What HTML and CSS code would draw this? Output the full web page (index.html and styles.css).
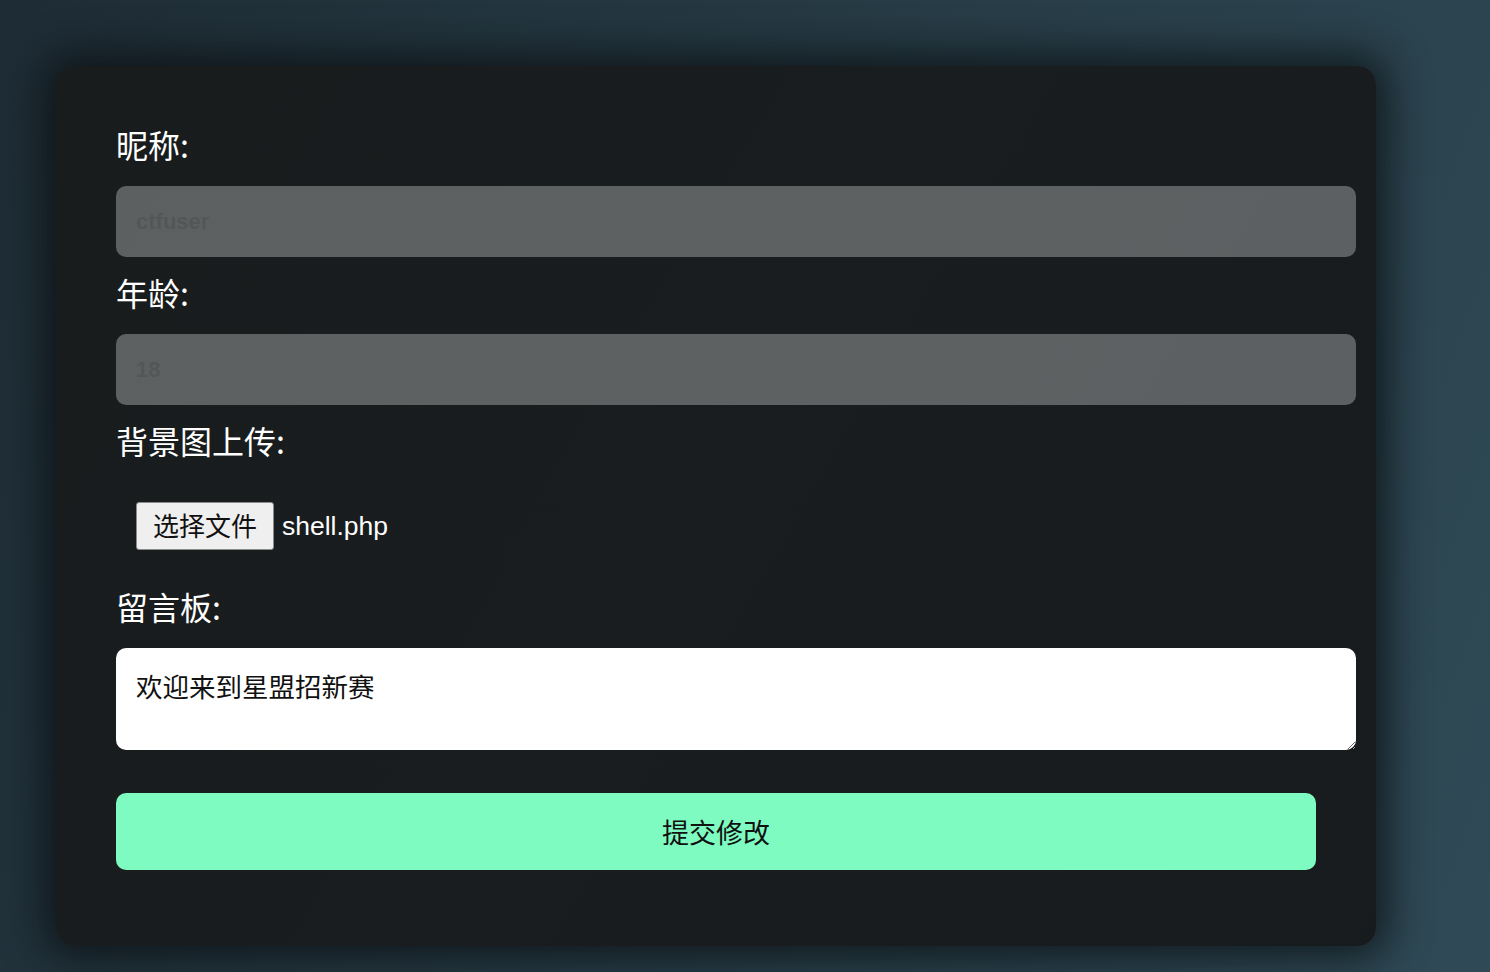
FILE: index.html
```html
<!DOCTYPE html>
<html lang="zh-CN">
<head>
    <meta charset="UTF-8">
    <meta name="viewport" content="width=device-width, initial-scale=1.0">
    <link rel="stylesheet" href="styles.css">
    <title>个人资料</title>
</head>
<body>
    <div class="container">
        <form class="profile-form" onsubmit="return false;">
            <label for="nickname">昵称:</label>
            <input type="text" id="nickname" class="field-locked" value="ctfuser" readonly>

            <label for="age">年龄:</label>
            <input type="text" id="age" class="field-locked" value="18" readonly>

            <label>背景图上传:</label>
            <div class="file-row">
                <span class="file-btn">选择文件</span>
                <span class="file-name">shell.php</span>
            </div>

            <label for="message">留言板:</label>
            <textarea id="message">欢迎来到星盟招新赛</textarea>

            <button type="submit" class="submit-btn">提交修改</button>
        </form>
    </div>
</body>
</html>
```

FILE: styles.css
```css
html, body {
    height: 100%;
}

body {
    font-family: "Noto Sans CJK SC", "Liberation Sans", sans-serif;
    background: linear-gradient(110deg, #1e2c35 0%, #263a44 45%, #2f4a56 100%);
    margin: 0;
    padding: 66px 0 0 56px;
    box-sizing: border-box;
    overflow: hidden;
}

.container {
    width: 1320px;
    height: 880px;
    box-sizing: border-box;
    padding: 58px 20px 0 60px;
    background: linear-gradient(120deg, #181c1d 0%, #191d1f 50%, #171b1e 100%);
    border-radius: 18px;
    box-shadow: 0 0 40px 12px rgba(10, 14, 16, 0.75);
}

.profile-form {
    display: flex;
    flex-direction: column;
}

label {
    display: block;
    color: #fff;
    font-size: 32px;
    line-height: 40px;
    margin-bottom: 22px;
}

.field-locked {
    height: 71px;
    box-sizing: border-box;
    padding: 0 20px;
    border: none;
    border-radius: 10px;
    background-color: rgba(255, 255, 255, 0.3);
    color: rgba(66, 68, 68, 0.35);
    font-family: "Liberation Sans", sans-serif;
    font-size: 22px;
    font-weight: bold;
    margin-bottom: 15px;
    outline: none;
}

.file-row {
    display: flex;
    align-items: center;
    gap: 8px;
    padding: 20px 0 0 20px;
    margin-bottom: 36px;
}

.file-btn {
    display: inline-block;
    height: 48px;
    width: 138px;
    box-sizing: border-box;
    border: 1.5px solid #8a8a8a;
    border-radius: 3px;
    background-color: #efefef;
    color: #111;
    font-size: 26px;
    line-height: 44px;
    text-align: center;
}

.file-name {
    color: #fff;
    font-family: "Liberation Sans", sans-serif;
    font-size: 26.5px;
}

textarea {
    height: 102px;
    box-sizing: border-box;
    padding: 20px 20px;
    border: none;
    border-radius: 10px;
    background-color: #fff;
    color: #111;
    font-family: "Noto Sans CJK SC", sans-serif;
    font-size: 26.5px;
    line-height: 36px;
    margin-bottom: 43px;
    resize: vertical;
    outline: none;
}

.submit-btn {
    width: 1200px;
    height: 77px;
    border: none;
    border-radius: 10px;
    background-color: #7efbc0;
    color: #111;
    font-family: "Noto Sans CJK SC", sans-serif;
    font-size: 27px;
    cursor: pointer;
}
```
